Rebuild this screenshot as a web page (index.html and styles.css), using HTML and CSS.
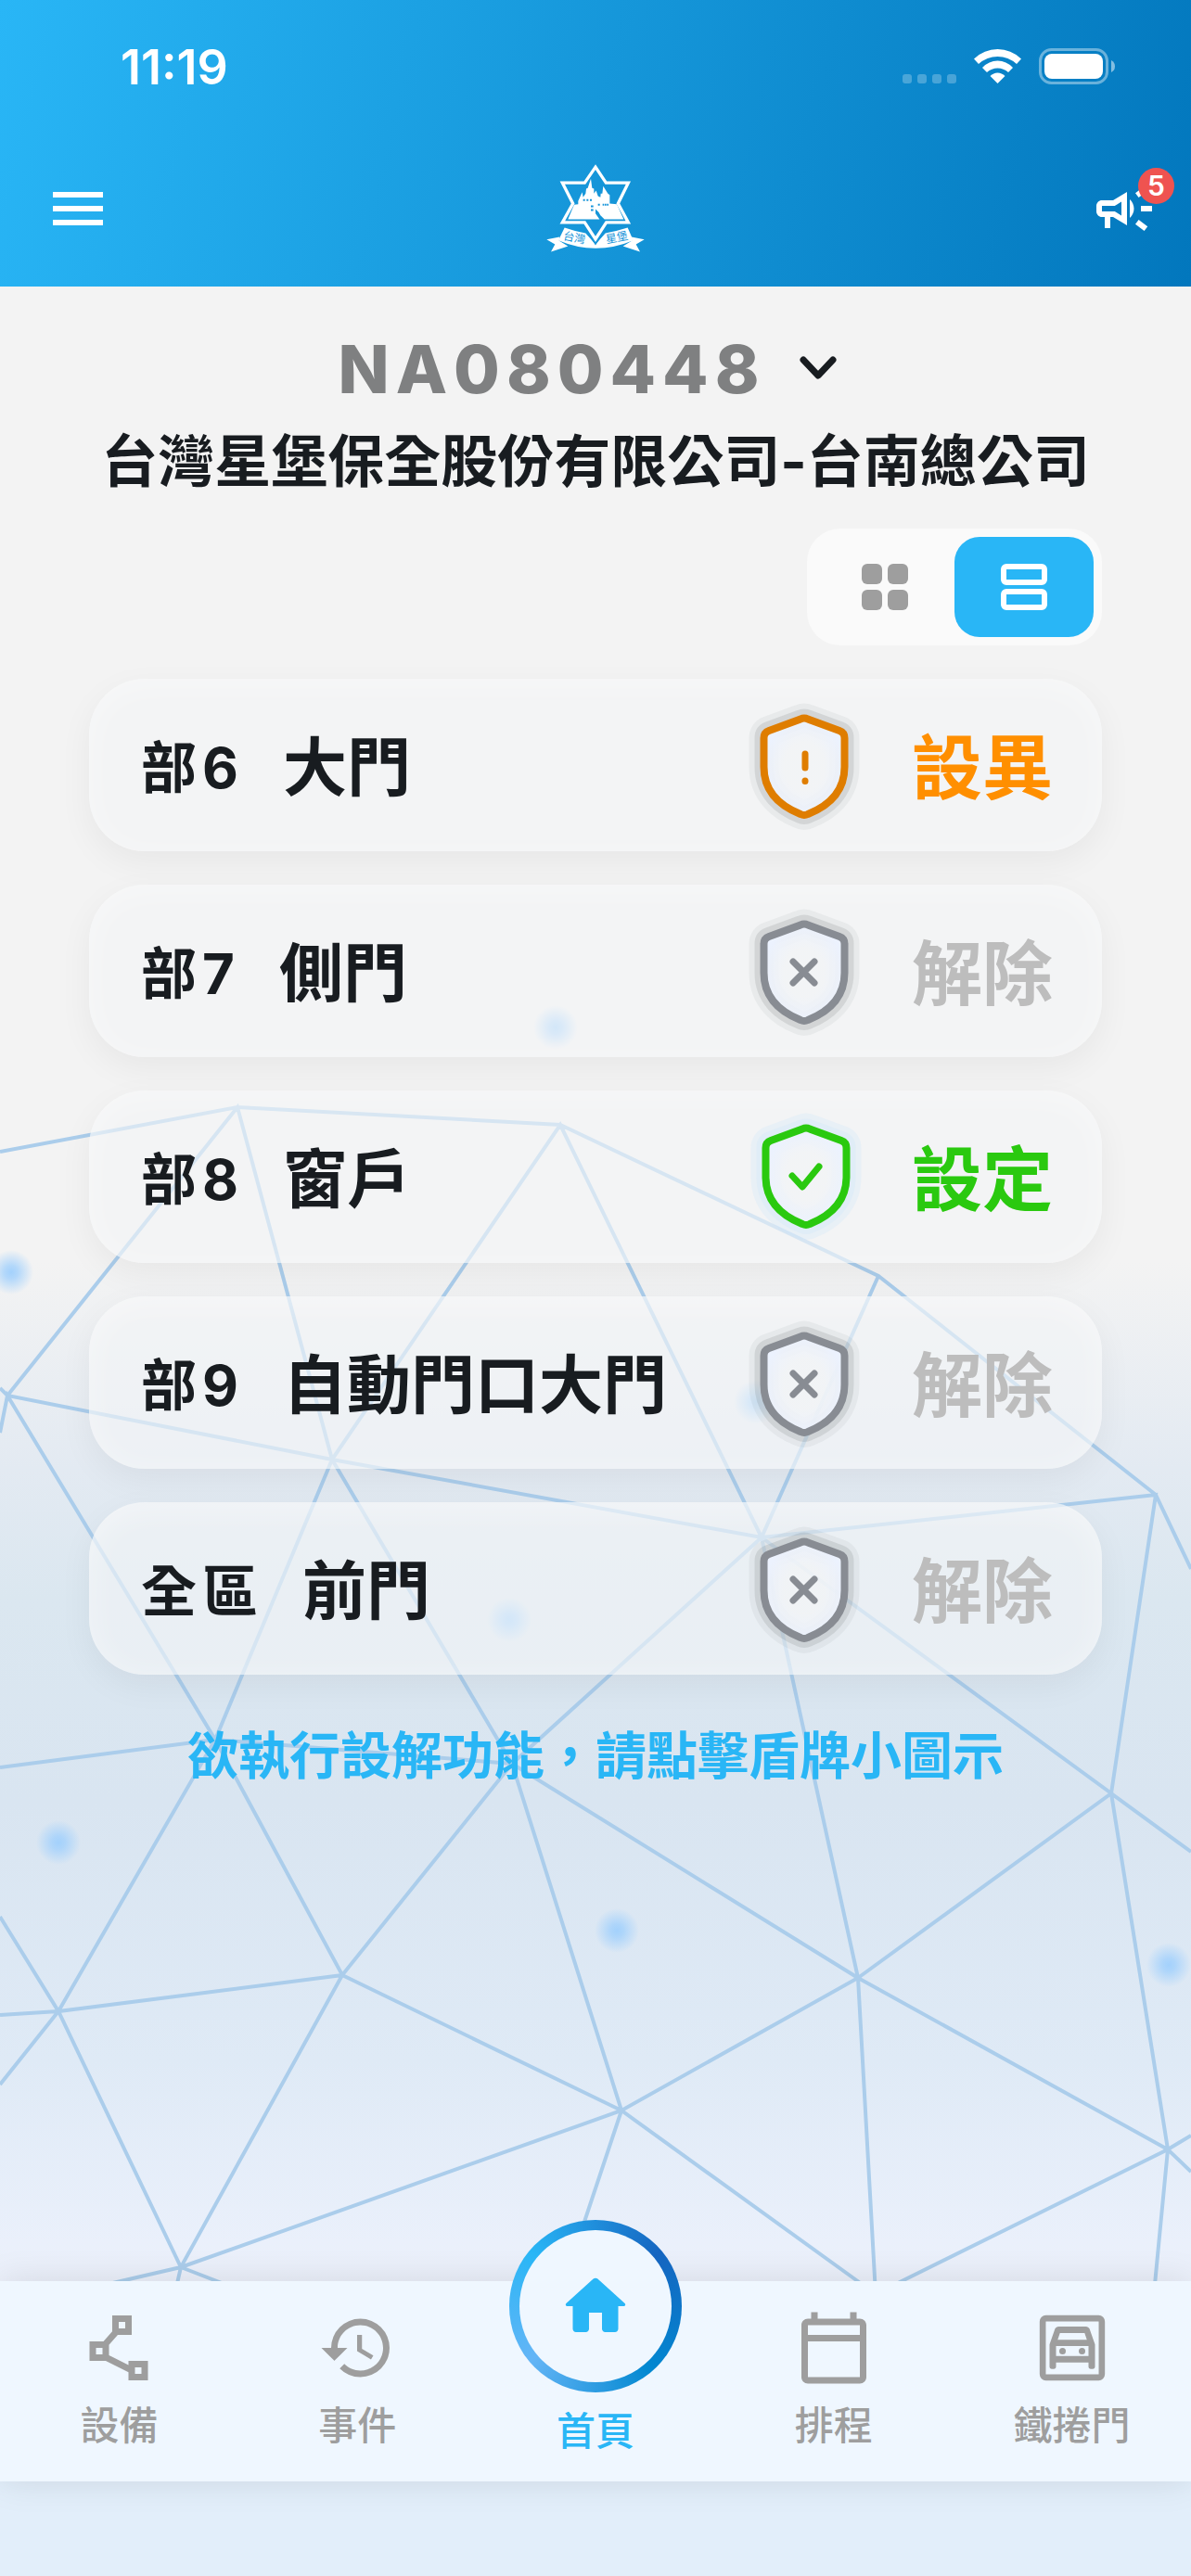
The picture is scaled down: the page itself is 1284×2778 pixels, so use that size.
FILE: index.html
```html
<!DOCTYPE html>
<html lang="zh-Hant">
<head>
    <meta charset="UTF-8">
    <meta name="viewport" content="width=device-width, initial-scale=1">
    <title>首頁</title>
    <link rel="stylesheet" href="styles.css">
</head>
<body>
    <svg class="mesh" viewBox="0 0 1284 2778" preserveAspectRatio="xMidYMid slice" aria-hidden="true">
        <defs>
            <radialGradient id="glow">
                <stop offset="0" stop-color="#a3d1fc"></stop>
                <stop offset="0.3" stop-color="#a3d1fc" stop-opacity="0.8"></stop>
                <stop offset="1" stop-color="#a3d1fc" stop-opacity="0"></stop>
            </radialGradient>
            <radialGradient id="inside">
                <stop offset="0.5" stop-color="#f2f4f6" stop-opacity="0.8"></stop>
                <stop offset="1" stop-color="#ecf2fe"></stop>
            </radialGradient>
            <symbol id="shield" viewBox="0 0 120 140">
                <path d="M56 18.500Q60 16.500 64 18.500L98 31Q103.500 33 103.500 39V70C103.500 98 84 113 64 121Q60 123 56 121C36 113 16.500 98 16.500 70V39Q16.500 33 22 31Z"></path>
            </symbol>
        </defs>
        <path class="mesh-lines" d="M0 1242L256 1194L604 1213L947 1376L1246 1612L1284 1692
            M8 1505L256 1194L358 1574L604 1213L821 1658L947 1376
            M0 1497L8 1505L358 1574L821 1658L1246 1612L1198 1934L1284 1997
            M0 1545L8 1505L232 1876L358 1574L552 1902L821 1658L925 2133
            M821 1658L1198 1934L925 2133
            M0 1906L232 1876L552 1902L369 2130L232 1876L63 2169
            M0 2067L63 2169L369 2130L195 2445L63 2169L0 2248M0 2173L63 2169
            M552 1902L670 2276L369 2130M552 1902L925 2133L670 2276L195 2445
            M1198 1934L1259 2318L925 2133L944 2474L670 2276L604 2474
            M944 2474L1259 2318L1284 2303M1284 2342L1259 2318L1244 2474
            M70 2474L195 2445L187 2480M195 2445L270 2474"></path>
        <g fill="url(#glow)">
            <circle cx="12" cy="1372" r="24"></circle>
            <circle cx="599" cy="1108" r="24"></circle>
            <circle cx="815" cy="1512" r="24"></circle>
            <circle cx="549" cy="1747" r="24"></circle>
            <circle cx="63" cy="1987" r="24"></circle>
            <circle cx="665" cy="2082" r="24"></circle>
            <circle cx="1260" cy="2119" r="24"></circle>
        </g>
    </svg>

    <header class="header">
        <div class="statusbar">
            <span class="time">11:19</span>
            <svg width="232" height="42" viewBox="972 52 232 42" fill="white">
                <g opacity="0.25">
                    <rect x="973" y="81" width="10" height="10" rx="3"></rect>
                    <rect x="989" y="81" width="10" height="10" rx="3"></rect>
                    <rect x="1005" y="81" width="10" height="10" rx="3"></rect>
                    <rect x="1021" y="81" width="10" height="10" rx="3"></rect>
                </g>
                <path d="M1050 64.500Q1061 54 1075.500 54T1101 64.500L1096 70Q1087 62 1075.500 62T1055 70Z"></path>
                <path d="M1059 74Q1066 66.500 1075.500 66.500T1092 74L1087 79Q1082 74.500 1075.500 74.500T1064 79Z"></path>
                <path d="M1067.500 83Q1071 79.500 1075.500 79.500T1083.500 83L1075.500 91Z"></path>
                <rect x="1121.500" y="54.500" width="72" height="36" rx="12" fill="none" stroke="white" stroke-width="3" opacity="0.4"></rect>
                <rect x="1126" y="59" width="63" height="27" rx="8"></rect>
                <path d="M1198 66Q1202 68 1202 72.500T1198 79Z" opacity="0.5"></path>
            </svg>
        </div>
        <div class="appbar">
            <button class="icon-btn" aria-label="選單">
                <svg class="icon" viewBox="0 0 24 24"><path d="M3 18h18v-2H3v2zm0-5h18v-2H3v2zm0-7v2h18V6H3z"></path></svg>
            </button>
            <svg class="logo" viewBox="84 50 324 290" fill="white">
                <path d="M88 296L130 288L128 300L157 318L146 322L102 336L115 312Z"></path>
                <path d="M404 296L362 288L364 300L335 318L346 322L390 336L377 312Z"></path>
                <path d="M146 258Q180 270 214 276L246 312L278 276Q312 270 350 258L368 299Q246 350 126 299Z"></path>
                <g class="logo-text">
                    <text x="140" y="296" transform="rotate(11 140 296)">台灣</text>
                    <text x="282" y="309" transform="rotate(-11 282 309)">星堡</text>
                </g>
                <path class="star-gap" d="M211 241L246 295L281 241"></path>
                <path class="star" d="M246 62L280 113L352 113L319 180L352 241L281 241L246 295L211 241L139 241L173 180L139 113L211 113Z"></path>
                <path d="M157 231L177 184L190 182L190 172L203 143L206 160L214 148L216 132L221 130L231 100L235 130L241 132L241 148L248 138L254 156L262 160L263 148L268 148L271 124L286 148L292 152L292 180L315 182L337 231H275L262 218L256 208L246 198L246 212L259 231Z"></path>
                <path class="windows" d="M206 166h6v6h-6zM217 166h6v6h-6zM228 166h6v6h-6zM231 186h8v6h-8zM231 198h8v6h-8zM254 181h6v6h-6zM269 181h5v6h-5zM276 181h5v6h-5zM283 181h5v6h-5z"></path>
            </svg>
            <button class="icon-btn" aria-label="公告">
                <svg class="icon" viewBox="0 0 24 24"><path d="M18 11v2h4v-2zM16 17.610l3.200 2.390 1.200-1.600-3.200-2.400zM20.400 5.600L19.200 4 16 6.400 17.200 8zM4 9c-1.100 0-2 .9-2 2v2c0 1.100.9 2 2 2h1v4h2v-4h1l5 3V6L8 9H4zm5.030 1.710L11 9.530v4.940l-1.970-1.180-.48-.29H4v-2h4.550l.48-.29zM15.500 12c0-1.330-.58-2.530-1.500-3.350v6.690c.92-.81 1.500-2.010 1.500-3.340z"></path></svg>
                <span class="badge">5</span>
            </button>
        </div>
    </header>

    <main class="content">
        <button class="site-code">
            <span>NA080448</span>
            <svg width="42" height="26" viewBox="0 0 42 26"><path d="M5 4L21 21L37 4"></path></svg>
        </button>
        <h1 class="company">台灣星堡保全股份有限公司-台南總公司</h1>

        <div class="view-toggle">
            <button class="view-btn" aria-label="方格">
                <svg width="50" height="50" viewBox="0 0 50 50">
                    <rect width="22" height="22" rx="6"></rect>
                    <rect x="28" width="22" height="22" rx="6"></rect>
                    <rect y="28" width="22" height="22" rx="6"></rect>
                    <rect x="28" y="28" width="22" height="22" rx="6"></rect>
                </svg>
            </button>
            <button class="view-btn active" aria-label="列表">
                <svg width="50" height="50" viewBox="0 0 50 50">
                    <rect class="line" x="3" y="3" width="44" height="17" rx="3"></rect>
                    <rect class="line" x="3" y="30" width="44" height="17" rx="3"></rect>
                </svg>
            </button>
        </div>

        <ul class="zones">
            <li class="zone alert">
                <span class="zone-no">部6</span>
                <span class="zone-name">大門</span>
                <button class="shield" aria-label="大門">
                    <svg width="120" height="140" viewBox="0 0 120 140">
                        <use class="halo2" href="#shield" width="120" height="140"></use>
                        <use class="halo" href="#shield" width="120" height="140"></use>
                        <use class="body" href="#shield" width="120" height="140"></use>
                        <path class="mark" d="M61 56V71M61 85V85.500"></path>
                    </svg>
                </button>
                <span class="zone-status">設異</span>
            </li>
            <li class="zone off">
                <span class="zone-no">部7</span>
                <span class="zone-name">側門</span>
                <button class="shield" aria-label="側門">
                    <svg width="120" height="140" viewBox="0 0 120 140">
                        <use class="halo2" href="#shield" width="120" height="140"></use>
                        <use class="halo" href="#shield" width="120" height="140"></use>
                        <use class="body" href="#shield" width="120" height="140"></use>
                        <path class="mark" d="M48 58L71 81M71 58L48 81"></path>
                    </svg>
                </button>
                <span class="zone-status">解除</span>
            </li>
            <li class="zone on">
                <span class="zone-no">部8</span>
                <span class="zone-name">窗戶</span>
                <button class="shield" aria-label="窗戶">
                    <svg width="120" height="140" viewBox="-2 2 120 140">
                        <use class="halo2" href="#shield" width="120" height="140"></use>
                        <use class="halo" href="#shield" width="120" height="140"></use>
                        <use class="body" href="#shield" width="120" height="140"></use>
                        <path class="mark" d="M45 69L56 81L74 59"></path>
                    </svg>
                </button>
                <span class="zone-status">設定</span>
            </li>
            <li class="zone off">
                <span class="zone-no">部9</span>
                <span class="zone-name">自動門口大門</span>
                <button class="shield" aria-label="自動門口大門">
                    <svg width="120" height="140" viewBox="0 0 120 140">
                        <use class="halo2" href="#shield" width="120" height="140"></use>
                        <use class="halo" href="#shield" width="120" height="140"></use>
                        <use class="body" href="#shield" width="120" height="140"></use>
                        <path class="mark" d="M48 58L71 81M71 58L48 81"></path>
                    </svg>
                </button>
                <span class="zone-status">解除</span>
            </li>
            <li class="zone off">
                <span class="zone-no">全區</span>
                <span class="zone-name">前門</span>
                <button class="shield" aria-label="前門">
                    <svg width="120" height="140" viewBox="0 0 120 140">
                        <use class="halo2" href="#shield" width="120" height="140"></use>
                        <use class="halo" href="#shield" width="120" height="140"></use>
                        <use class="body" href="#shield" width="120" height="140"></use>
                        <path class="mark" d="M48 58L71 81M71 58L48 81"></path>
                    </svg>
                </button>
                <span class="zone-status">解除</span>
            </li>
        </ul>

        <p class="hint">欲執行設解功能，請點擊盾牌小圖示</p>
    </main>

    <nav class="tabbar">
        <a class="tab" href="#">
            <svg class="tab-icon" viewBox="0 0 24 24"><path fill-rule="evenodd" d="M15 16v1.260l-6-3v-3.170L11.700 8H16V2h-6v4.900L7.300 10H3v6h5l7 3.500V22h6v-6h-6zM12 4h2v2h-2V4zM7 14H5v-2h2v2zm12 6h-2v-2h2v2z"></path></svg>
            <span>設備</span>
        </a>
        <a class="tab" href="#">
            <svg class="tab-icon" viewBox="0 0 24 24"><path d="M13 3a9 9 0 0 0-9 9H1l3.890 3.890.07.14L9 12H6c0-3.870 3.130-7 7-7s7 3.130 7 7-3.130 7-7 7c-1.930 0-3.680-.79-4.940-2.060l-1.420 1.420A8.954 8.954 0 0 0 13 21a9 9 0 0 0 0-18zm-1 5v5l4.280 2.540.72-1.210-3.500-2.080V8H12z"></path></svg>
            <span>事件</span>
        </a>
        <a class="tab home" href="#">
            <span class="home-ring">
                <svg class="tab-icon" viewBox="0 0 24 24"><path d="M10 19v-5h4v5c0 .55.45 1 1 1h3c.55 0 1-.45 1-1v-7h1.700c.46 0 .68-.57.33-.87L12.670 3.600c-.38-.34-.96-.34-1.340 0l-8.360 7.530c-.34.300-.13.870.33.870H5v7c0 .55.45 1 1 1h3c.55 0 1-.45 1-1z"></path></svg>
            </span>
            <span>首頁</span>
        </a>
        <a class="tab" href="#">
            <svg class="tab-icon" viewBox="0 0 24 24"><path d="M20 3h-1V1h-2v2H7V1H5v2H4c-1.100 0-2 .9-2 2v16c0 1.100.9 2 2 2h16c1.100 0 2-.9 2-2V5c0-1.100-.9-2-2-2zm0 18H4V10h16v11zm0-13H4V5h16v3z"></path></svg>
            <span>排程</span>
        </a>
        <a class="tab" href="#">
            <svg class="tab-icon" viewBox="0 0 24 24">
                <rect x="2.900" y="2.900" width="18.200" height="18.200" rx="1" fill="none" stroke="currentColor" stroke-width="1.900"></rect>
                <path fill-rule="evenodd" d="M17.300 6.100C17.100 5.700 16.700 5.400 16.200 5.400H7.800c-.5 0-.9.3-1.100.7L5 10.900V17.800c0 .4.3.7.7.7h.6c.4 0 .7-.3.7-.7v-1.300h10v1.300c0 .4.3.7.7.7h.6c.4 0 .7-.3.7-.7V10.900zM8.200 7.400h7.600l.7 2.100h-9zM17 14.500H7v-3.100h10z"></path>
                <circle cx="9" cy="13" r="1"></circle>
                <circle cx="15" cy="13" r="1"></circle>
            </svg>
            <span>鐵捲門</span>
        </a>
    </nav>
</body>
</html>
```

FILE: styles.css
```css
* {
    box-sizing: border-box;
}
body {
    margin: 0;
    min-height: 100vh;
    display: flex;
    flex-direction: column;
    position: relative;
    overflow-x: hidden;
    padding-bottom: 102px; /* home indicator area */
    font-family: Inter, "Noto Sans CJK TC", sans-serif;
    color: #181c20;
    background: linear-gradient(#f3f3f3 49%, #e3eaf2 57%, #dbe7f0 62%, #d9e5f1 70%, #dfeaf6 80%, #eaf0fb 87%, #ecf0fa 89%, #e2eefa 96%);
}
button {
    border: none;
    background: none;
    padding: 0;
    font: inherit;
    color: inherit;
    cursor: pointer;
}
.mesh {
    position: absolute;
    top: 0;
    left: 0;
    width: 100%;
    height: 100%;
    z-index: -1;
}
.mesh-lines {
    fill: none;
    stroke: #abcdeb;
    stroke-width: 4;
}

/* header */
.header {
    color: white;
    background: linear-gradient(104deg, #29b6f6, #0277bd);
}
.statusbar {
    height: 144px;
    display: flex;
    justify-content: space-between;
    align-items: center;
    padding: 0 80px 0 130px;
}
.time {
    font-size: 52px;
    font-weight: 600;
}
.appbar {
    height: 165px;
    display: grid;
    grid-template-columns: 1fr auto 1fr;
    align-items: center;
    padding: 0 36px 4px;
}
.icon-btn {
    position: relative;
    width: 72px;
    height: 72px;
    margin-left: 12px;
}
.logo + .icon-btn {
    justify-self: end;
}
.icon {
    display: block;
    width: 72px;
    height: 72px;
    fill: white;
}
.badge {
    position: absolute;
    top: -8px;
    right: -18px;
    width: 39px;
    height: 39px;
    border-radius: 50%;
    background: #ef5350;
    font-size: 30px;
    line-height: 39px;
    font-weight: 600;
    text-align: center;
}
.logo {
    width: 108px;
    height: 97px;
}
.logo-text {
    fill: #1694d9;
    font-size: 36px;
}
.star {
    fill: none;
    stroke: white;
    stroke-width: 10;
}
.star-gap {
    fill: #1694d9;
    stroke: #1694d9;
    stroke-width: 22;
}
.windows {
    fill: #1694d9;
}

/* content */
.content {
    flex: 1;
    display: flex;
    flex-direction: column;
    padding: 43px 96px 0;
}
.site-code {
    align-self: center;
    display: flex;
    align-items: center;
    gap: 36px;
    height: 90px;
    padding-right: 16px;
    font-size: 72px;
    font-weight: 800;
    letter-spacing: 7px;
    color: #7f8081;
}
.site-code svg {
    fill: none;
    stroke: #181c20;
    stroke-width: 7;
    stroke-linecap: round;
    stroke-linejoin: round;
}
.company {
    margin: 14px -48px 0;
    font-size: 61px;
    line-height: 84px;
    font-weight: 700;
    text-align: center;
}
.view-toggle {
    align-self: flex-end;
    display: flex;
    margin-top: 30px;
    padding: 9px;
    border-radius: 36px;
    background: #fafafa;
}
.view-btn {
    width: 150px;
    height: 108px;
    border-radius: 27px;
    display: flex;
    justify-content: center;
    align-items: center;
    fill: #9e9e9e;
}
.view-btn.active {
    background: #29b6f6;
}
.view-btn .line {
    fill: none;
    stroke: white;
    stroke-width: 6;
}

/* zone list */
.zones {
    list-style: none;
    margin: 36px 0 0;
    padding: 0;
    display: flex;
    flex-direction: column;
    gap: 36px;
}
.zone {
    height: 186px;
    display: flex;
    align-items: center;
    padding: 0 53px 4px 56px;
    border-radius: 60px;
    background: rgba(243, 245, 247, 0.6);
    box-shadow: 0 12px 36px rgba(0, 0, 0, 0.05), inset 0 6px 36px rgba(255, 255, 255, 0.4);
}
.zone-no {
    font-size: 60px;
    font-weight: 700;
    letter-spacing: 6px;
}
.zone-name {
    margin-left: 42px;
    font-size: 69px;
    font-weight: 700;
}
.shield {
    margin-top: 8px;
    margin-left: auto;
    width: 120px;
    height: 140px;
}
.shield svg {
    display: block;
    overflow: visible;
}
.halo2,
.halo {
    fill: none;
    stroke: rgba(70, 80, 80, 0.06);
    stroke-width: 32;
    stroke-linejoin: round;
}
.halo {
    stroke: rgba(70, 80, 80, 0.13);
    stroke-width: 20;
}
.body {
    fill: url(#inside);
    stroke: #888c93;
    stroke-width: 8;
}
.mark {
    fill: none;
    stroke: #888c93;
    stroke-width: 7;
    stroke-linecap: round;
    stroke-linejoin: round;
}
.zone-status {
    margin-left: 56px;
    font-size: 76px;
    font-weight: 700;
    color: #bdbdbd;
}
.alert .body,
.alert .mark {
    stroke: #df7d00;
}
.alert .zone-status {
    color: #ff8f00;
}
.on .body,
.on .mark {
    stroke: #2ac90f;
}
.on .halo,
.on .halo2 {
    stroke: rgba(200, 228, 250, 0.25);
}
.on .zone-status {
    color: #2ac90f;
}
.hint {
    margin: 48px 0;
    font-size: 55px;
    line-height: 78px;
    font-weight: 700;
    text-align: center;
    color: #29b6f6;
}

/* bottom tabs */
.tabbar {
    height: 216px;
    display: grid;
    grid-template-columns: repeat(5, 1fr);
    background: #eff7ff;
    box-shadow: 0 0 36px rgba(0, 0, 0, 0.1);
}
.tab {
    display: flex;
    flex-direction: column;
    align-items: center;
    padding-top: 30px;
    gap: 10px;
    font-size: 42px;
    line-height: 64px;
    font-weight: 500;
    color: #9e9e9e;
    text-decoration: none;
}
.tab-icon {
    width: 84px;
    height: 84px;
    fill: currentColor;
}
.tab.home {
    margin-top: -66px;
    padding-top: 0;
    color: #29b6f6;
}
.home-ring {
    width: 186px;
    height: 186px;
    border: 11px solid transparent;
    border-radius: 50%;
    display: flex;
    justify-content: center;
    align-items: center;
    background: linear-gradient(#eff7ff, #eff7ff) padding-box, conic-gradient(from 50deg, #1565c0, #0288d1 90deg, #64b5f6 180deg, #29b6f6 260deg, #1565c0) border-box;
}
```
